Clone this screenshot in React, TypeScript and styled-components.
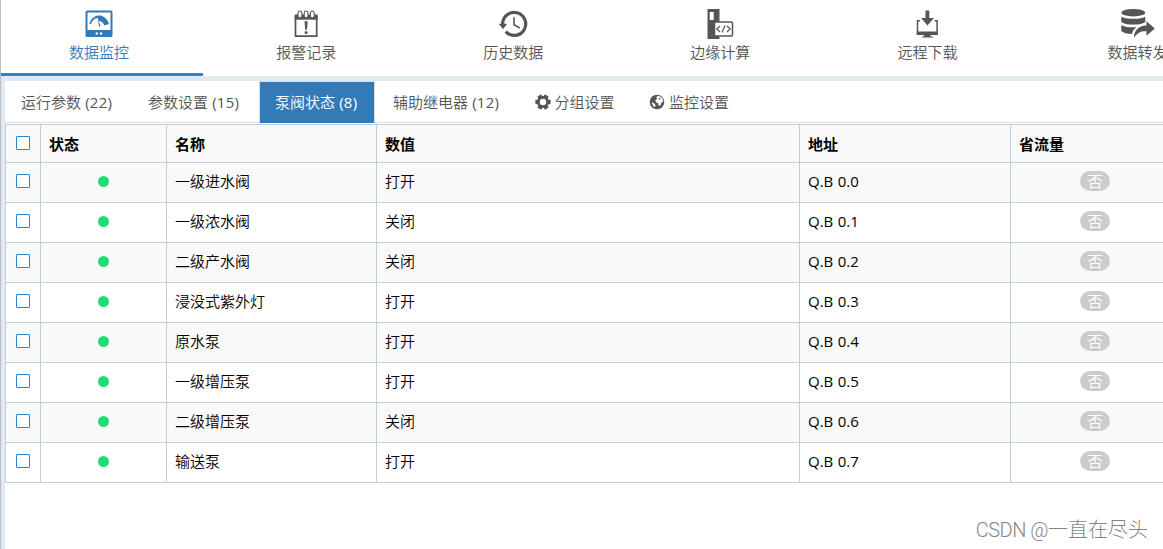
import React from 'react';
import styled, { createGlobalStyle, css } from 'styled-components';

const GlobalStyle = createGlobalStyle`
  * { box-sizing: border-box; }
  html, body { margin: 0; padding: 0; background: #fff; }
  body {
    overflow: hidden;
    font-family: 'Open Sans', 'Noto Sans CJK SC', sans-serif;
    font-size: 15px;
    font-weight: 350;
    color: #000;
  }
`;

const Page = styled.div`
  position: relative;
  height: 549px;
  width: 1163px;
  overflow: hidden;
  display: flex;
  flex-direction: column;
  border-left: 1px solid #b9bbbe;
`;

const Nav = styled.nav`
  display: flex;
  gap: 5px;
  height: 76px;
  flex: none;
  background: #fff;
`;

const NavItem = styled.a<{ $active?: boolean; $width?: number }>`
  flex: 0 0 ${(p) => p.$width ?? 202.1}px;
  height: 76px;
  padding: 8px 6px 0 0;
  display: flex;
  flex-direction: column;
  align-items: center;
  white-space: nowrap;
  color: ${(p) => (p.$active ? '#337ab7' : '#555')};
  border-bottom: 3px solid ${(p) => (p.$active ? '#2a86d1' : 'transparent')};
  svg { display: block; flex: none; }
`;

const NavLabel = styled.span`
  margin-top: 1px;
  line-height: 22px;
`;

const Frame = styled.main`
  flex: 1;
  display: flex;
  flex-direction: column;
  border: solid #e2e9f0;
  border-width: 5px 0 0 4px;
  background: #fff;
`;

const Tabs = styled.div`
  display: flex;
  height: 42px;
  flex: none;
  border-bottom: 1px solid #ddd;
`;

const Tab = styled.a<{ $width: number; $active?: boolean }>`
  flex: 0 0 ${(p) => p.$width}px;
  height: 42px;
  padding-left: 15px;
  border: 1px solid transparent;
  border-bottom: 0;
  display: flex;
  align-items: center;
  white-space: nowrap;
  color: #555;
  svg { flex: none; margin-right: 4px; margin-bottom: 2px; }
  ${(p) =>
    p.$active &&
    css`
      margin-right: 2px;
      color: #fff;
      background: #337ab7;
      border-color: #ddd;
    `}
`;

const TabText = styled.span`
  padding-bottom: 2px;
`;

const Count = styled.span`
  font-weight: 400;
  letter-spacing: 0.25px;
`;

const Table = styled.div`
  margin-top: 1px;
  width: 1174px;
  border: 1px solid #c0cddb;
  border-bottom: 0;
`;

const Cell = styled.div<{ $center?: boolean }>`
  display: flex;
  align-items: center;
  justify-content: ${(p) => (p.$center ? 'center' : 'flex-start')};
  padding: 0 8px;
  border-right: 1px solid #c0cddb;
  white-space: nowrap;
`;

const AddressCell = styled(Cell)`
  font-weight: 400;
  word-spacing: 0.5px;
`;

const Row = styled.div<{ $head?: boolean; $shaded?: boolean }>`
  display: grid;
  grid-template-columns: 35px 126px 210px 423px 211px 168px;
  height: ${(p) => (p.$head ? 38 : 40)}px;
  border-bottom: 1px solid #c0cddb;
  background: ${(p) => (p.$shaded ? '#f9f9f9' : '#fff')};
  font-weight: ${(p) => (p.$head ? 700 : 350)};
  ${Cell} {
    padding-bottom: ${(p) => (p.$head ? 1 : 4)}px;
  }
`;

const Checkbox = styled.span<{ $raised?: boolean }>`
  width: 14px;
  height: 14px;
  flex: none;
  margin-bottom: ${(p) => (p.$raised ? 1 : 0)}px;
  border: 1px solid #2a86d1;
  border-radius: 1px;
  background: #fff;
`;

const Dot = styled.span`
  width: 11px;
  height: 11px;
  margin-top: 1px;
  border-radius: 50%;
  background: #23dc78;
`;

const Pill = styled.span`
  width: 30px;
  height: 20px;
  border-radius: 10px;
  background: #ccc;
  color: #fff;
  font-weight: 400;
  line-height: 20px;
  padding-left: 1px;
  text-align: center;
`;

const Watermark = styled.div`
  position: absolute;
  right: 15px;
  bottom: 4px;
  font-family: Roboto, 'Noto Sans CJK SC', sans-serif;
  font-weight: 300;
  font-size: 20px;
  line-height: 30px;
  color: #858585;
  white-space: nowrap;
`;

const Handle = styled.span`
  letter-spacing: -0.5px;
`;

const MeterIcon = () => (
  <svg width="32" height="32" viewBox="0 0 32 32">
    <rect x="2.500" y="2.500" width="27" height="26.500" rx="1.500" fill="#337ab7" />
    <rect x="4.500" y="4.500" width="23" height="17.500" fill="#fff" />
    <path d="M6.300 15.800C8.300 10 12.300 7.500 16 7.500s8 2.300 10 8.500l-4.700 1.600c-.8-2.800-2.700-4.500-5.300-4.700L14.300 9.800c-3 .8-5 2.800-6.300 6.200z" fill="#337ab7" />
    <path d="M14.300 10l3.300 8-1.500.6z" fill="#337ab7" />
    <circle cx="13.700" cy="25.500" r="1.200" fill="#fff" />
    <circle cx="18" cy="25.500" r="1.200" fill="#fff" />
  </svg>
);

const AlarmIcon = () => (
  <svg width="32" height="32" viewBox="0 0 32 32">
    <path d="M5.500 8v20.200h21.200V8" fill="none" stroke="#555" strokeWidth="1.700" />
    <path d="M4.700 6.500h22.900v5.200H4.700z" fill="#555" />
    <g fill="#fff" stroke="#555" strokeWidth="1.100">
      <rect x="8" y="3" width="3.800" height="6.800" rx="1.900" />
      <rect x="14.200" y="3" width="3.800" height="6.800" rx="1.900" />
      <rect x="20.400" y="3" width="3.800" height="6.800" rx="1.900" />
    </g>
    <path d="M14.500 13.200h3.200l-.7 8.500h-1.800z" fill="#555" />
    <circle cx="16.100" cy="24.500" r="1.500" fill="#555" />
  </svg>
);

const HistoryIcon = () => (
  <svg width="32" height="32" viewBox="0 0 32 32">
    <path d="M5.700 16.500A11.500 11.500 0 1 1 8.700 23.700" fill="none" stroke="#555" strokeWidth="3.200" />
    <path d="M1.800 15.700h8.400l-4.200 5.500z" fill="#555" />
    <path d="M17 9.300v7.500l5.800 3.200" fill="none" stroke="#555" strokeWidth="1.600" />
  </svg>
);

const EdgeIcon = () => (
  <svg width="32" height="32" viewBox="0 0 32 32">
    <path d="M3.500 1h12v30h-12z" fill="#555" />
    <path d="M5.700 4h4v8h-4z" fill="#fff" />
    <rect x="10.500" y="14" width="18" height="14" rx="1" fill="#fff" stroke="#555" strokeWidth="1.500" />
    <path d="M16 18l-3.200 3 3.200 3M23 18l3.200 3-3.200 3M21 17.500l-3 7" fill="none" stroke="#555" strokeWidth="1.200" />
  </svg>
);

const DownloadIcon = () => (
  <svg width="32" height="32" viewBox="0 0 32 32">
    <path d="M9 12.800H6.500V26h19.600V12.800h-2.500" fill="none" stroke="#555" strokeWidth="1.500" />
    <path d="M5.800 23.500h21V27h-21zM13 27h6.500v1.500H22v1H11v-1h2z" fill="#555" />
    <path d="M14.500 2.500h3.800v7.500H23L16.500 17.500 10 10h4.500z" fill="#555" />
  </svg>
);

const ForwardIcon = () => (
  <svg width="36" height="32" viewBox="0 0 36 32">
    <g fill="#555" transform="translate(.8 0)">
      <ellipse cx="13.500" cy="4.700" rx="12" ry="3.700" />
      <path d="M1.500 8.500c3 3.100 21 3.100 24 0V14c-3 3.400-21 3.400-24 0z" />
      <path d="M1.500 17c3.300 2.300 9.500 2.800 15 2-2.500 2.200-3.700 4.300-4.300 7-4.500 0-8.700-.9-10.700-3z" />
      <path d="M26.700 13.300l8.300 7.200-8.300 7.200v-4.500c-5.500-.3-9 1.300-12.700 6.800.6-7.800 4.500-12 12.700-12.500z" />
    </g>
  </svg>
);

const GearIcon = () => (
  <svg width="16" height="16" viewBox="0 0 16 16">
    <g fill="#555">
      {[30, 90, 150].map((a) => (
        <rect key={a} x="5.700" y="0.400" width="4.600" height="15.200" rx=".6" transform={`rotate(${a} 8 8)`} />
      ))}
      <circle cx="8" cy="8" r="5.900" />
    </g>
    <circle cx="8" cy="8" r="3.200" fill="#fff" />
  </svg>
);

const GlobeIcon = () => (
  <svg width="16" height="16" viewBox="0 0 16 16">
    <circle cx="8" cy="8" r="7.300" fill="#555" />
    <path d="M8.500 2l3 .6 2 2 .8 2.900-1.800 1-1.200 3-1.600.3-.7-2.800-2-.4-.6-2.300 1.800-1.700-.9-1zM2.500 8.300l2.500 1 1.600 1.700-.8 2.500-1.800-1.700z" fill="#fff" />
    <path d="M9.500 4.500l1.500-.7.6 1.200-1.300.7z" fill="#555" />
  </svg>
);

const navItems = [
  { label: '数据监控', icon: <MeterIcon />, active: true },
  { label: '报警记录', icon: <AlarmIcon /> },
  { label: '历史数据', icon: <HistoryIcon /> },
  { label: '边缘计算', icon: <EdgeIcon /> },
  { label: '远程下载', icon: <DownloadIcon /> },
  { label: '数据转发', icon: <ForwardIcon />, width: 208 },
];

const tabs = [
  { label: '运行参数', count: 22, width: 127 },
  { label: '参数设置', count: 15, width: 127 },
  { label: '泵阀状态', count: 8, width: 116, active: true },
  { label: '辅助继电器', count: 12, width: 141.5 },
  { label: '分组设置', width: 114.5, icon: <GearIcon /> },
  { label: '监控设置', width: 115, icon: <GlobeIcon /> },
];

const rows = [
  ['一级进水阀', '打开', 'Q.B 0.0'],
  ['一级浓水阀', '关闭', 'Q.B 0.1'],
  ['二级产水阀', '关闭', 'Q.B 0.2'],
  ['浸没式紫外灯', '打开', 'Q.B 0.3'],
  ['原水泵', '打开', 'Q.B 0.4'],
  ['一级增压泵', '打开', 'Q.B 0.5'],
  ['二级增压泵', '关闭', 'Q.B 0.6'],
  ['输送泵', '打开', 'Q.B 0.7'],
];

export default function App() {
  return (
    <Page>
      <GlobalStyle />
      <Nav>
        {navItems.map((n) => (
          <NavItem key={n.label} $active={n.active} $width={n.width}>
            {n.icon}
            <NavLabel>{n.label}</NavLabel>
          </NavItem>
        ))}
      </Nav>
      <Frame>
        <Tabs>
          {tabs.map((t) => (
            <Tab key={t.label} $width={t.width} $active={t.active}>
              {t.icon}
              <TabText>
                {t.label}
                {t.count !== undefined && <Count> ({t.count})</Count>}
              </TabText>
            </Tab>
          ))}
        </Tabs>
        <Table>
          <Row $head $shaded>
            <Cell $center><Checkbox $raised /></Cell>
            <Cell>状态</Cell>
            <Cell>名称</Cell>
            <Cell>数值</Cell>
            <Cell>地址</Cell>
            <Cell>省流量</Cell>
          </Row>
          {rows.map(([name, value, address], i) => (
            <Row key={name} $shaded={i % 2 === 0}>
              <Cell $center><Checkbox /></Cell>
              <Cell $center><Dot /></Cell>
              <Cell>{name}</Cell>
              <Cell>{value}</Cell>
              <AddressCell>{address}</AddressCell>
              <Cell $center><Pill>否</Pill></Cell>
            </Row>
          ))}
        </Table>
      </Frame>
      <Watermark><Handle>CSDN @</Handle>一直在尽头</Watermark>
    </Page>
  );
}
